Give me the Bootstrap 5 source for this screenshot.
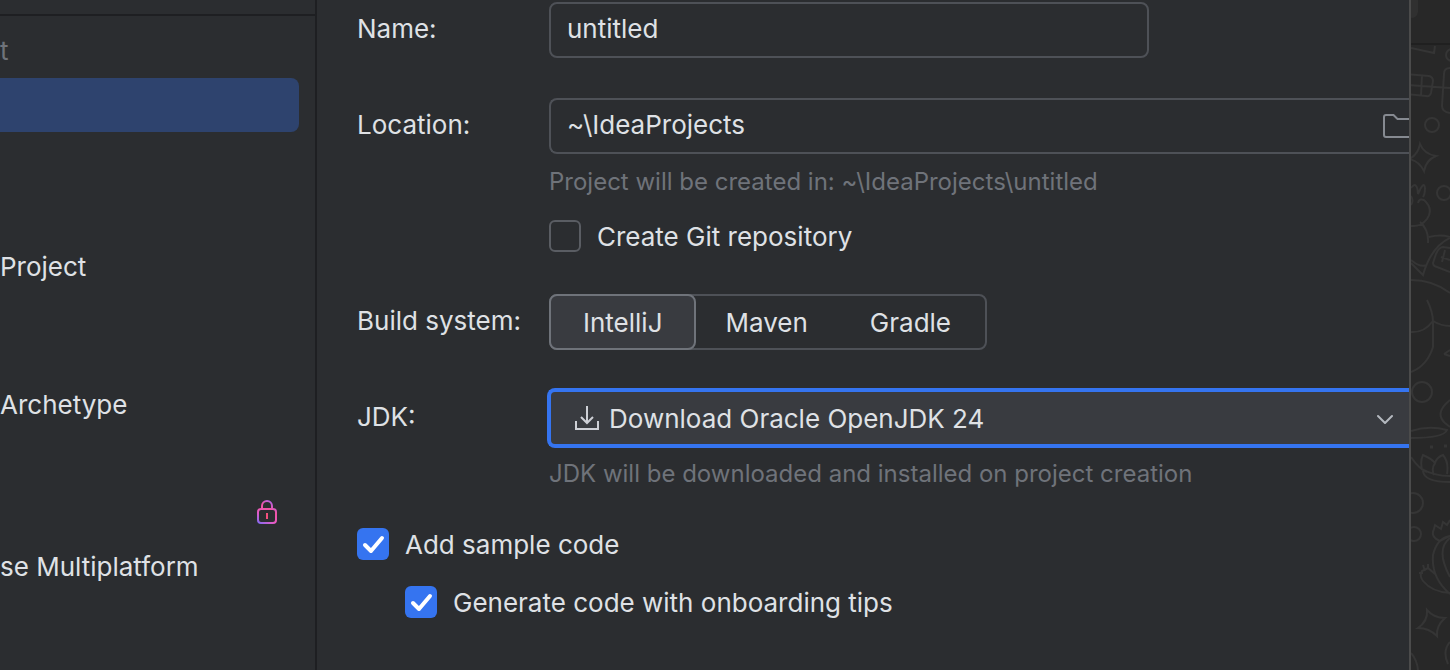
<!DOCTYPE html>
<html lang="en" data-bs-theme="dark">
<head>
<meta charset="utf-8">
<meta name="viewport" content="width=device-width, initial-scale=1">
<title>New Project</title>
<link href="https://cdn.jsdelivr.net/npm/bootstrap@5.3.0/dist/css/bootstrap.min.css" rel="stylesheet">
<style>
  body { background: #2b2d30; color: #dfe1e5; font-family: Inter, sans-serif; font-size: 26px; line-height: 32px; font-optical-sizing: none; }
  .sidebar { width: 317px; border-right: 2px solid #1e1f22; }
  .sidebar-top { height: 16px; border-bottom: 2px solid #1e1f22; }
  .group-title { height: 62px; padding-top: 19px; color: #6f737a; }
  .gen { display: flex; align-items: center; height: 54px; margin-right: 16px; color: inherit; text-decoration: none; white-space: nowrap; }
  .gen.active { background: #2e436e; border-radius: 0 8px 8px 0; }
  .gen-break { height: 30px; }
  .dialog { border-right: 2px solid #4b4b4b; padding: 2px 0 0 40px; }
  .field-row { display: grid; grid-template-columns: 192px minmax(0, 1fr); margin-bottom: 40px; }
  .field-row:last-of-type { margin-bottom: 38px; }
  .field-row > .caption { padding-top: 11px; }
  .field { height: 56px; border: 2px solid #4e5157; border-radius: 8px; background: #2b2d30; color: #dfe1e5; font-size: 26px; line-height: 32px; padding: 0 16px 4px; }
  .field:focus { background: #2b2d30; color: #dfe1e5; box-shadow: none; border-color: #3574f0; }
  .name-field { max-width: 600px; }
  .cut-field { border-right: 0; border-radius: 8px 0 0 8px; }
  .hint { color: #6f737a; font-size: 24px; margin-top: 12px; }
  .tick-row { display: flex; gap: 16px; height: 32px; margin-bottom: 26px; }
  .tick-row > label { padding-top: 1px; }
  .hint + .tick-row { margin: 22px 0 2px; }
  .checks { margin-top: -2px; }
  .tick { appearance: none; flex: none; width: 32px; height: 32px; margin: 0; border: 2px solid #5a5d63; border-radius: 6px; background: transparent; }
  .tick:checked { border: 0; background: #3574f0 url("data:image/svg+xml,%3Csvg xmlns='http://www.w3.org/2000/svg' viewBox='0 0 32 32'%3E%3Cpath d='M8 17l6 6L25 10' fill='none' stroke='white' stroke-width='4' stroke-linecap='round' stroke-linejoin='round'/%3E%3C/svg%3E"); }
  .segments { display: inline-flex; height: 56px; border: 2px solid #4e5157; border-radius: 8px; vertical-align: top; }
  .segment { margin: -2px 0 -2px -2px; padding: 13px 32px 11px; border-radius: 8px; }
  .segment:last-child { padding-right: 34px; }
  .btn-check:checked + .segment { background: #393b40; border: 2px solid #6f737a; padding: 11px 31px 9px 32px; }
  .jdk { margin: -2px 0 -2px -2px; }
  .jdk select { display: block; appearance: none; width: 100%; height: 60px; border: 4px solid #3574f0; border-right: 0; border-radius: 8px 0 0 8px; background: #393b40; color: #dfe1e5; padding: 2px 56px 0 58px; font-size: 26px; line-height: 32px; outline: 0; }
  .over { position: absolute; top: 0; bottom: 0; margin: auto 0; pointer-events: none; }
  .backdrop { width: 39px; background: #282828; }
</style>
<script src="https://cdn.jsdelivr.net/npm/bootstrap@5.3.0/dist/js/bootstrap.bundle.min.js"></script>
</head>
<body>
<div class="d-flex vh-100 overflow-hidden">

  <nav class="sidebar flex-shrink-0 overflow-hidden" aria-label="Generators">
    <div class="sidebar-top"></div>
    <div class="group-title">t</div>
    <a class="gen active" href="#" aria-label="New project"></a>
    <div class="gen"></div>
    <div class="gen"></div>
    <a class="gen" href="#">Project</a>
    <div class="gen"></div>
    <div class="gen-break"></div>
    <a class="gen" href="#">Archetype</a>
    <div class="gen"></div>
    <a class="gen justify-content-end pe-3" href="#" aria-label="Locked generator">
      <svg class="me-1" width="24" height="28" viewBox="0 0 24 28" fill="none" stroke="url(#lockfill)" stroke-width="2">
        <defs><linearGradient id="lockfill" gradientUnits="userSpaceOnUse" x1="20" y1="2" x2="4" y2="26"><stop offset="0" stop-color="#a068f5"/><stop offset=".35" stop-color="#f453a4"/><stop offset=".65" stop-color="#e65bc4"/><stop offset="1" stop-color="#7a6cf8"/></linearGradient></defs>
        <path d="M7 10V7a5 5 0 0 1 10 0v3"/><rect x="3" y="10" width="18" height="14" rx="3"/><path d="M12 14v6" stroke="#f4507c"/>
      </svg>
    </a>
    <a class="gen" href="#">se Multiplatform</a>
  </nav>

  <main class="dialog flex-grow-1 overflow-hidden">
    <form>
      <div class="field-row">
        <label class="caption" for="name">Name:</label>
        <input class="form-control field name-field" id="name" type="text" value="untitled">
      </div>

      <div class="field-row">
        <label class="caption" for="location">Location:</label>
        <div>
          <div class="position-relative">
            <input class="form-control field cut-field" id="location" type="text" value="~\IdeaProjects">
            <svg class="over end-0" width="27" height="28" viewBox="0 0 27 28" fill="none" stroke="#868a91" stroke-width="2"><path d="M30 7H15.500L11.500 3H4Q2 3 2 5V23Q2 25 4 25H30"/></svg>
          </div>
          <div class="hint">Project will be created in: ~\IdeaProjects\untitled</div>
          <div class="tick-row">
            <input class="tick" type="checkbox" id="git">
            <label for="git">Create Git repository</label>
          </div>
        </div>
      </div>

      <div class="field-row">
        <div class="caption" id="build">Build system:</div>
        <div>
          <div class="segments" role="radiogroup" aria-labelledby="build">
            <input class="btn-check" type="radio" name="build" id="intellij" checked><label class="segment" for="intellij">IntelliJ</label>
            <input class="btn-check" type="radio" name="build" id="maven"><label class="segment" for="maven">Maven</label>
            <input class="btn-check" type="radio" name="build" id="gradle"><label class="segment" for="gradle">Gradle</label>
          </div>
        </div>
      </div>

      <div class="field-row">
        <label class="caption" for="jdk">JDK:</label>
        <div>
          <div class="jdk position-relative">
            <select id="jdk"><option>Download Oracle OpenJDK 24</option></select>
            <svg class="over start-0 ms-4" width="32" height="28" viewBox="0 0 32 28" fill="none" stroke="#ced0d6" stroke-width="2"><path d="M16 2V18M10 13l6 6 6-6M5 17V25H27V17"/></svg>
            <svg class="over end-0 me-3" width="16" height="12" viewBox="0 0 16 12" fill="none" stroke="#b4b8bf" stroke-width="2" stroke-linecap="round" stroke-linejoin="round"><path d="M1 4l7 7 7-7"/></svg>
          </div>
          <div class="hint">JDK will be downloaded and installed on project creation</div>
        </div>
      </div>

      <div class="checks">
        <div class="tick-row">
          <input class="tick" type="checkbox" id="sample" checked>
          <label for="sample">Add sample code</label>
        </div>
        <div class="tick-row ms-5">
          <input class="tick" type="checkbox" id="tips" checked>
          <label for="tips">Generate code with onboarding tips</label>
        </div>
      </div>
    </form>
  </main>

  <aside class="backdrop flex-shrink-0 overflow-hidden" aria-hidden="true">
    <svg class="d-block" width="39" height="670" viewBox="0 0 39 670" fill="none" stroke="#353535" stroke-width="2">
      <path d="M0 0H7V12Q6 18 0 18Z" fill="#303030" stroke="none"/>
      <path d="M0 44H39" stroke="#202020"/>
      <path d="M0 48L23 53L24 46M-6 74L18 76Q22 77 22 81L20 93Q19 97 15 96L-6 94M11 75L10 96M-2 85L39 88M39 68Q33 68 33 74L31 106Q31 112 39 113"/>
      <circle cx="41" cy="55" r="6"/><circle cx="21" cy="125" r="7"/>
      <path d="M9 144Q13 154 25 156Q15 160 13 171Q8 161-2 159Q7 155 9 144Z"/>
      <circle cx="33" cy="193" r="7"/>
      <path d="M0 188Q6 180 7 194Q13 180 14 188Q14 194 12 197M0 196Q3 201 0 205M7 203Q8 198 13 200Q23 209 16 219Q10 227 0 226M11 223L15 230M9 222Q18 230 17 243M18 237Q29 234 39 237M0 260Q9 268 16 265M0 263L12 275Q20 247 39 238M39 248L32 247Q28 247 25 254L22 263Q22 266 26 267L39 272M34 250L31 262M39 260L30 257"/>
      <path d="M0 280Q22 280 39 293M16 300Q22 312 22 322V347Q16 366 0 372M0 332Q13 333 22 321Q30 326 39 326M33 354L39 350M33 354L39 356"/>
      <circle cx="11" cy="392" r="10"/>
      <path d="M39 400Q23 413 34 423L39 427M0 431Q18 425 36 430Q33 438 0 438M0 457Q8 469 16 472M11 470Q9 461 12 455Q21 459 24 463Q26 457 32 455Q38 462 36 474M24 463Q20 469 23 475M11 469Q23 476 39 476M12 471Q13 482 39 482"/>
      <path d="M19 447h3M33 446h3" stroke-width="3"/>
      <circle cx="2" cy="503" r="10"/><circle cx="3" cy="534" r="7"/>
      <path d="M39 520L36 525L32 522L30 529L24 525L23 529Q19 537 29 541L39 536Q26 538 22 555Q20 578 39 594M39 538Q24 549 39 577M24 574L17 568L11 571Q8 576 12 581Q21 592 39 593M12 565L14 571M8 573H12M17 564V568"/>
      <path d="M16 610Q23 618 34 618Q25 626 26 636Q18 628 7 628Q17 621 16 610Z"/>
      <path d="M39 642Q31 651 37 664M0 653Q6 660 7 670"/>
    </svg>
  </aside>
</div>
</body>
</html>
